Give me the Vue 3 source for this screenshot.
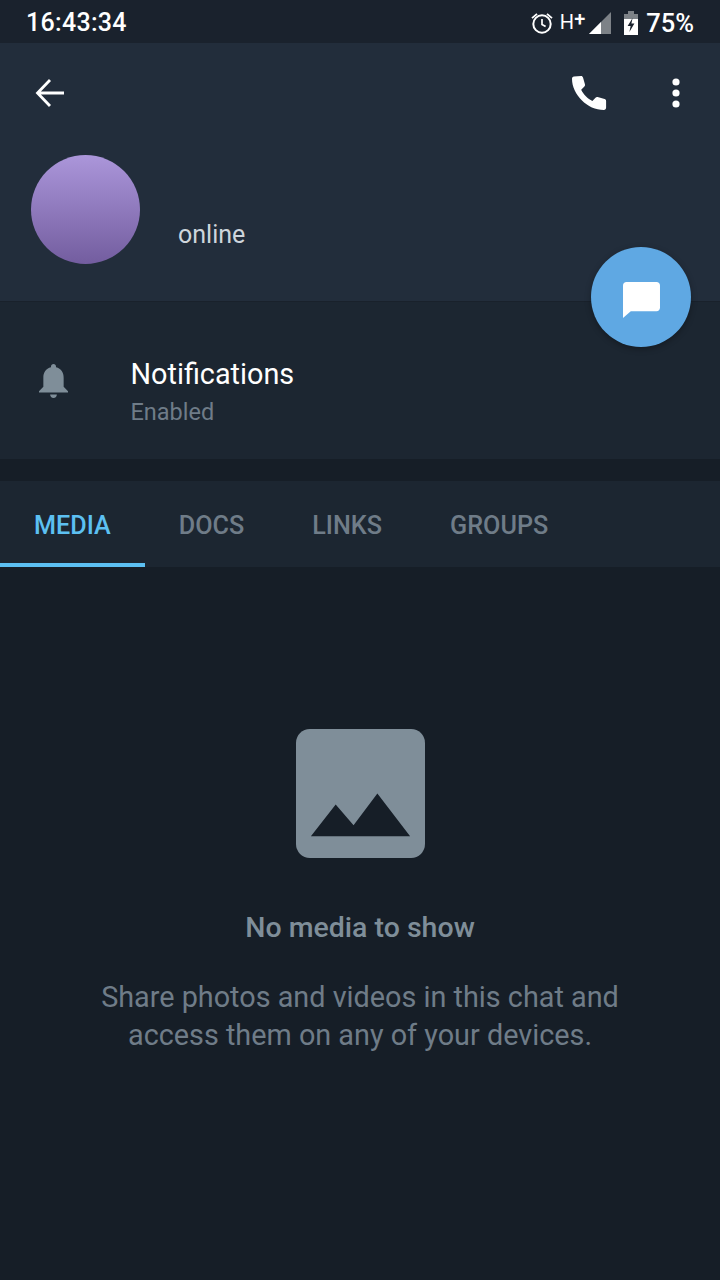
<script setup>
const tabs = ['MEDIA', 'DOCS', 'LINKS', 'GROUPS']
const activeTab = 'MEDIA'
</script>

<template>
  <div class="screen">
    <div class="status-bar">
      <span class="clock">16:43:34</span>
      <div class="status-icons">
        <svg class="alarm" width="24" height="24" viewBox="0 0 24 24">
          <circle cx="12" cy="13" r="8.7" fill="none" stroke="#fff" stroke-width="2" />
          <path d="M12 8v5.4l3.6 2.2" fill="none" stroke="#fff" stroke-width="1.7" />
          <path d="M1.4 6.4 6.4 2.2l1.2 1.4-5 4.2zM22.6 6.4l-5-4.2-1.2 1.4 5 4.2z" fill="#fff" />
        </svg>
        <span class="network">H<sup>+</sup></span>
        <svg class="signal" width="22" height="22" viewBox="0 0 22 22">
          <path d="M0 22 22 0v22z" fill="#7d8287" />
          <path d="M0 22 12 10v12z" fill="#fff" />
        </svg>
        <svg class="battery" width="14" height="24" viewBox="0 0 14 24">
          <path d="M4 0h6v3h4v21H0V3h4z" fill="#fff" />
          <path d="M4 0h6v3h4v5H0V3h4z" fill="#7d8287" />
          <path d="M8.6 7 3.6 15h3L5.4 21l5-8.4h-3z" fill="#1a222d" />
        </svg>
        <span class="percent">75%</span>
      </div>
    </div>

    <header class="profile">
      <div class="toolbar">
        <svg class="back" width="32" height="32" viewBox="0 0 32 32">
          <path d="M30 16H4M16 3 3.5 16 16 29" fill="none" stroke="#fff" stroke-width="2.8" />
        </svg>
        <div class="actions">
          <svg width="36" height="36" viewBox="0 0 36 36">
            <path d="M3 1.500 10 1c1 0 1.800.6 2 1.500l2 7c.2.800 0 1.500-.6 2.100l-3.200 3.100c2 4.400 6.700 9.100 11.200 11.200l3.100-3.200c.6-.6 1.300-.8 2.100-.6l7 2c.9.200 1.500 1 1.500 2v6.500c0 1.300-.9 2.400-2.200 2.400C16.500 35 1 19.500 1 3.700 1 2.500 1.800 1.600 3 1.500z" fill="#fff" />
          </svg>
          <svg width="10" height="30" viewBox="0 0 10 30">
            <circle cx="5" cy="4" r="3.600" fill="#fff" />
            <circle cx="5" cy="15" r="3.600" fill="#fff" />
            <circle cx="5" cy="26" r="3.600" fill="#fff" />
          </svg>
        </div>
      </div>
      <div class="identity">
        <div class="avatar"></div>
        <span class="presence">online</span>
      </div>
      <button class="fab">
        <svg width="37" height="36" viewBox="0 0 38 37">
          <path d="M3.500 0h31C36.500 0 38 1.500 38 3.500v23c0 2-1.500 3.500-3.500 3.500H8L0 37V3.500C0 1.500 1.500 0 3.500 0z" fill="#fff" />
        </svg>
      </button>
    </header>

    <section class="notifications">
      <svg class="bell" width="29" height="35" viewBox="0 0 30 36">
        <path d="M15 0c1.500 0 2.600 1.100 2.600 2.500v.8C23 4.500 25.500 9 25.500 14v9.500L30 28v1.500H0V28l4.500-4.500V14c0-5 2.500-9.500 7.900-10.700v-.8C12.400 1.100 13.500 0 15 0z" fill="#7f8e99" />
        <path d="M11.500 31.500h7c0 2-1.500 3.500-3.500 3.500s-3.500-1.500-3.500-3.500z" fill="#7f8e99" />
      </svg>
      <div class="notify-text">
        <div class="notify-title">Notifications</div>
        <div class="notify-state">Enabled</div>
      </div>
    </section>

    <nav class="tabs">
      <div v-for="tab in tabs" :key="tab" class="tab" :class="{ active: tab === activeTab }">{{ tab }}</div>
    </nav>

    <main class="empty">
      <svg class="empty-icon" width="129" height="129" viewBox="0 0 130 130">
        <rect width="130" height="130" rx="14" fill="#7f8e99" />
        <path d="M15 108 40 76 58 97 82 65 115 108z" fill="#161e27" />
      </svg>
      <h2 class="empty-title">No media to show</h2>
      <p class="empty-text">Share photos and videos in this chat and<br />access them on any of your devices.</p>
    </main>
  </div>
</template>

<style>
html,
body {
  margin: 0;
  background: #161e27;
}
</style>

<style scoped>
.screen {
  position: relative;
  width: 720px;
  height: 1280px;
  overflow: hidden;
  background: #161e27;
  font-family: Roboto, "Liberation Sans", sans-serif;
}

.status-bar {
  height: 43px;
  box-sizing: border-box;
  padding: 2px 26px 0;
  display: flex;
  align-items: center;
  justify-content: space-between;
  background: #1a222d;
  color: #fff;
}

.clock {
  font-size: 25px;
  font-weight: 500;
  letter-spacing: 0.3px;
}

.status-icons {
  display: flex;
  align-items: center;
}

.alarm {
  margin-right: 6px;
}

.network {
  font-size: 20px;
  line-height: 24px;
  margin-top: -2px;
}

.network sup {
  font-size: 20px;
  line-height: 0;
  vertical-align: 3px;
  font-weight: 500;
}

.signal {
  margin-left: 4px;
}

.battery {
  margin-left: 13px;
}

.percent {
  margin-left: 8px;
  font-size: 25.500px;
  font-weight: 500;
}

.profile {
  position: relative;
  height: 258px;
  background: #222d3b;
  border-bottom: 1px solid #19212b;
}

.toolbar {
  height: 100px;
  box-sizing: border-box;
  padding: 0 39px 0 34px;
  display: flex;
  align-items: center;
  justify-content: space-between;
}

.actions {
  display: flex;
  align-items: center;
  gap: 64px;
}

.identity {
  padding: 12px 0 0 31px;
  display: flex;
  align-items: flex-end;
}

.avatar {
  width: 109px;
  height: 109px;
  border-radius: 50%;
  background: linear-gradient(to bottom, #ab96da, #735d9f);
}

.presence {
  margin: 0 0 15px 38px;
  font-size: 25px;
  color: #ced5dc;
}

.fab {
  position: absolute;
  right: 29px;
  top: 204px;
  width: 100px;
  height: 100px;
  padding: 0;
  border: 0;
  border-radius: 50%;
  display: flex;
  align-items: center;
  justify-content: center;
  background: #5fa8e3;
  box-shadow: 0 2px 6px rgba(0, 0, 0, 0.3);
}

.fab svg {
  margin-top: 5px;
}

.notifications {
  height: 157px;
  display: flex;
  align-items: center;
  background: #1c2631;
}

.bell {
  margin: 2px 0 0 39px;
}

.notify-text {
  margin: 23px 0 0 62.500px;
}

.notify-title {
  font-size: 28.800px;
  line-height: 36px;
  color: #fff;
}

.notify-state {
  margin-top: 4px;
  font-size: 23.500px;
  line-height: 32px;
  color: #6f7c88;
}

.tabs {
  height: 86px;
  margin-top: 22px;
  display: flex;
  background: #1c2631;
}

.tab {
  box-sizing: border-box;
  padding: 2px 34px 0;
  display: flex;
  align-items: center;
  font-size: 25.200px;
  font-weight: 500;
  color: #6f7c88;
}

.tab.active {
  color: #5cc0f2;
  box-shadow: inset 0 -4px 0 #5cc0f2;
}

.empty {
  padding-top: 162px;
  display: flex;
  flex-direction: column;
  align-items: center;
  text-align: center;
}

.empty-title {
  margin: 52px 0 0;
  font-size: 28.500px;
  line-height: 36px;
  font-weight: 500;
  color: #7f8e99;
}

.empty-text {
  margin: 32px 0 0;
  font-size: 28.800px;
  line-height: 38px;
  color: #6f7c88;
}
</style>
